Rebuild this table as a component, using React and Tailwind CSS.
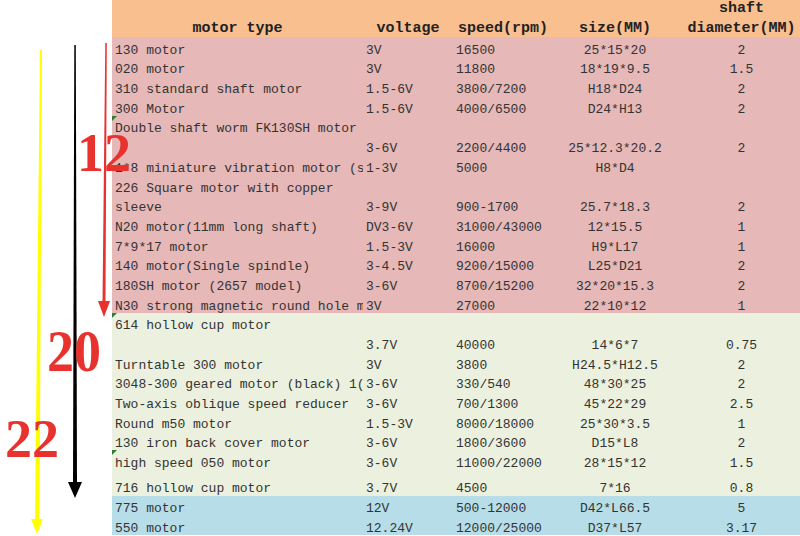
const rows = [
  { bg: "bg-[#e6b8b7]", t: "130 motor", v: "3V", s: "16500", z: "25*15*20", d: "2" },
  { bg: "bg-[#e6b8b7]", t: "020 motor", v: "3V", s: "11800", z: "18*19*9.5", d: "1.5" },
  { bg: "bg-[#e6b8b7]", t: "310 standard shaft motor", v: "1.5-6V", s: "3800/7200", z: "H18*D24", d: "2" },
  { bg: "bg-[#e6b8b7]", t: "300 Motor", v: "1.5-6V", s: "4000/6500", z: "D24*H13", d: "2" },
  { bg: "bg-[#e6b8b7]", t: "Double shaft worm FK130SH motor", mark: true },
  { bg: "bg-[#e6b8b7]", t: "", v: "3-6V", s: "2200/4400", z: "25*12.3*20.2", d: "2" },
  { bg: "bg-[#e6b8b7]", t: "1*8 miniature vibration motor (small)", v: "1-3V", s: "5000", z: "H8*D4", d: "" },
  { bg: "bg-[#e6b8b7]", t: "226 Square motor with copper" },
  { bg: "bg-[#e6b8b7]", t: "sleeve", v: "3-9V", s: "900-1700", z: "25.7*18.3", d: "2" },
  { bg: "bg-[#e6b8b7]", t: "N20 motor(11mm long shaft)", v: "DV3-6V", s: "31000/43000", z: "12*15.5", d: "1" },
  { bg: "bg-[#e6b8b7]", t: "7*9*17 motor", v: "1.5-3V", s: "16000", z: "H9*L17", d: "1" },
  { bg: "bg-[#e6b8b7]", t: "140 motor(Single spindle)", v: "3-4.5V", s: "9200/15000", z: "L25*D21", d: "2" },
  { bg: "bg-[#e6b8b7]", t: "180SH motor (2657 model)", v: "3-6V", s: "8700/15200", z: "32*20*15.3", d: "2" },
  { bg: "bg-[#e6b8b7]", t: "N30 strong magnetic round hole motor", v: "3V", s: "27000", z: "22*10*12", d: "1" },
  { bg: "bg-[#ebf1de]", t: "614 hollow cup motor", mark: true },
  { bg: "bg-[#ebf1de]", t: "", v: "3.7V", s: "40000", z: "14*6*7", d: "0.75" },
  { bg: "bg-[#ebf1de]", t: "Turntable 300 motor", v: "3V", s: "3800", z: "H24.5*H12.5", d: "2" },
  { bg: "bg-[#ebf1de]", t: "3048-300 geared motor (black) 1(00rpm)", v: "3-6V", s: "330/540", z: "48*30*25", d: "2" },
  { bg: "bg-[#ebf1de]", t: "Two-axis oblique speed reducer", v: "3-6V", s: "700/1300", z: "45*22*29", d: "2.5" },
  { bg: "bg-[#ebf1de]", t: "Round m50 motor", v: "1.5-3V", s: "8000/18000", z: "25*30*3.5", d: "1" },
  { bg: "bg-[#ebf1de]", t: "130 iron back cover motor", v: "3-6V", s: "1800/3600", z: "D15*L8", d: "2" },
  { bg: "bg-[#ebf1de]", t: "high speed 050 motor", v: "3-6V", s: "11000/22000", z: "28*15*12", d: "1.5", mark: true },
  { bg: "bg-[#ebf1de]", t: "716 hollow cup motor", v: "3.7V", s: "4500", z: "7*16", d: "0.8", tall: true },
  { bg: "bg-[#b7dee8]", t: "775 motor", v: "12V", s: "500-12000", z: "D42*L66.5", d: "5" },
  { bg: "bg-[#b7dee8]", t: "550 motor", v: "12.24V", s: "12000/25000", z: "D37*L57", d: "3.17" },
];

const cols = "grid grid-cols-[251px_90px_100px_124px_129px]";

const Row = ({ r }) => (
  <div className={`${cols} ${r.bg} ${r.tall ? "h-[25.4px] pb-[1px]" : "h-[19.7px]"} shrink-0`}>
    <div className="relative flex items-end overflow-hidden whitespace-nowrap pl-[3px]">
      {r.mark && (
        <span className="absolute left-0 top-0 h-0 w-0 border-t-[5px] border-r-[5px] border-t-[#2e7d32] border-r-transparent" />
      )}
      {r.t}
    </div>
    <div className="flex items-end whitespace-nowrap pl-[3px]">{r.v}</div>
    <div className="flex items-end whitespace-nowrap pl-[3px]">{r.s}</div>
    <div className="flex items-end justify-center whitespace-nowrap">{r.z}</div>
    <div className="flex items-end justify-center whitespace-nowrap">{r.d}</div>
  </div>
);

const Arrows = () => (
  <svg className="absolute left-0 top-0" width="112" height="536" viewBox="0 0 112 536">
    {/* yellow */}
    <polygon points="40,50 42,50 39.5,521 35,521" fill="#ffff00" />
    <polygon points="31,519 43,519 37,534" fill="#ffff00" />
    {/* black */}
    <polygon points="74.3,45 75.8,45 77,484 73,484" fill="#000" />
    <polygon points="68,482 82,482 75,498" fill="#000" />
    {/* red */}
    <polygon points="105.3,43 106.8,43 105.5,302 102.5,302" fill="#e8322e" />
    <polygon points="98,301 110,301 104,317" fill="#e8322e" />
  </svg>
);

const Num = ({ children, className }) => (
  <div
    className={`absolute text-[54px] font-bold leading-none text-[#e8322e] ${className}`}
    style={{ fontFamily: '"Liberation Serif", serif' }}
  >
    {children}
  </div>
);

export default function App() {
  return (
    <div
      className="relative flex h-[536px] w-[800px] overflow-hidden bg-white text-[13px] text-[#333]"
      style={{ fontFamily: '"Liberation Mono", monospace' }}
    >
      <div className="w-[112px] shrink-0" />
      <div className="flex min-w-0 flex-1 flex-col overflow-hidden leading-[13px]">
        <div className={`${cols} h-[37px] shrink-0 bg-[#fabf8f] text-[15px] font-bold leading-[17px] text-[#222]`}>
          <div className="flex items-end justify-center">motor type</div>
          <div className="flex items-end justify-center">voltage</div>
          <div className="flex items-end justify-center">speed(rpm)</div>
          <div className="flex items-end justify-center">size(MM)</div>
          <div className="flex flex-col items-center justify-end">
            <div className="mb-[3px]">shaft</div>
            <div>diameter(MM)</div>
          </div>
        </div>
        {rows.map((r, i) => (
          <Row key={i} r={r} />
        ))}
      </div>
      <Arrows />
      <Num className="left-[77px] top-[126px]">12</Num>
      <Num className="left-[47px] top-[322px] scale-y-[1.08] origin-top">20</Num>
      <Num className="left-[5px] top-[412px]">22</Num>
    </div>
  );
}
